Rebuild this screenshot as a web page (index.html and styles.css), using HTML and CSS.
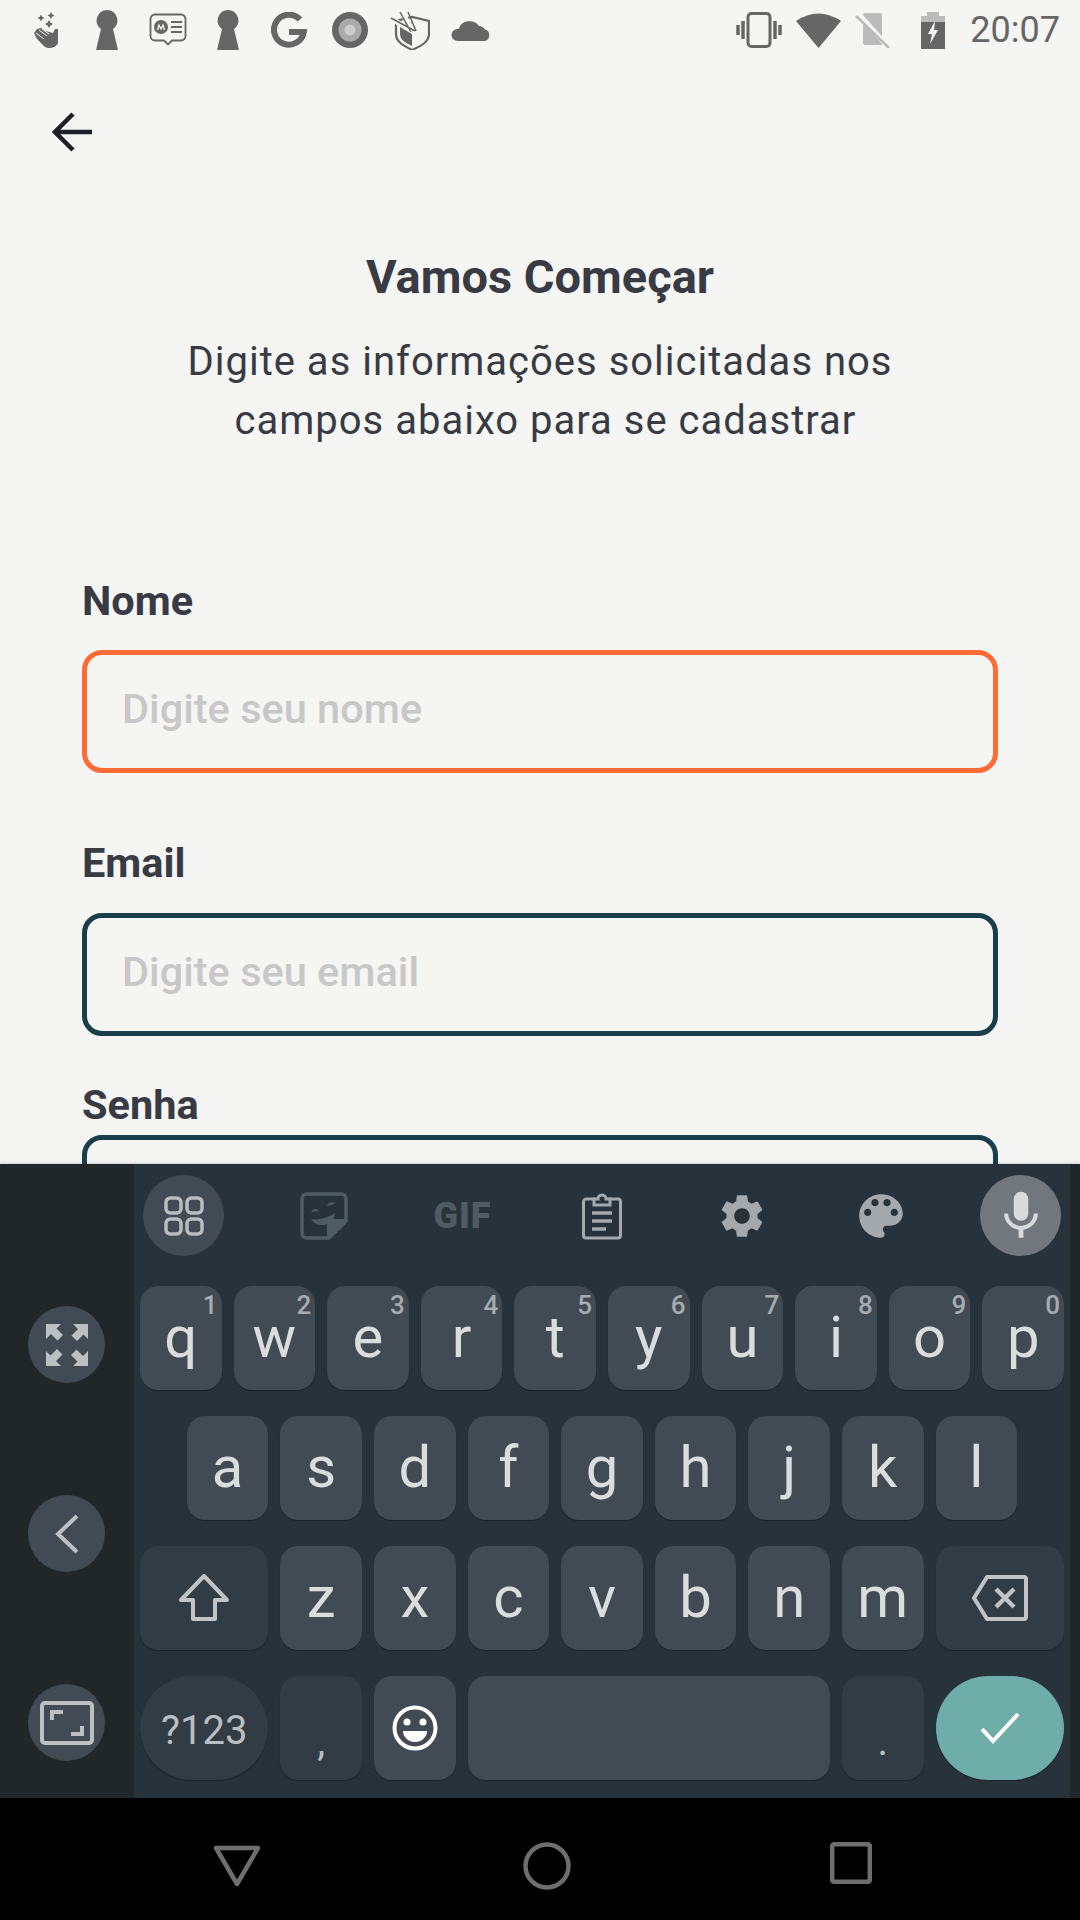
FILE: index.html
```html
<!DOCTYPE html>
<html lang="pt-BR">
<head>
  <meta charset="UTF-8">
  <title>Vamos Começar</title>
  <link rel="stylesheet" href="styles.css">
</head>
<body>
  <div class="screen">
    <div class="status-bar">
      <div class="status-left">
        <span class="status-cell"><svg width="26" height="36" viewBox="0 0 26 36"><path fill="#666" d="M1 21l3-4 4-1 5 3 7 2 2-4 3 0v14q-2 5-9 5-4 0-7-4l-5-5z"/><path fill="none" stroke="#f5f5f3" stroke-width="1" d="M3 21l8 6M6 18l8 6M9 17l7 5"/><path fill="#666" d="M8 2.500l1.200 2.300 2.300 1.200-2.300 1.200L8 9.500 6.800 7.200 4.500 6l2.300-1.200zM18 0l1.200 2.300 2.300 1.200-2.300 1.200L18 7l-1.200-2.300-2.300-1.200 2.300-1.200zM16 8l1.500 2.500L20 12l-2.500 1.500L16 16l-1.500-2.500L12 12l2.500-1.500z"/></svg></span>
        <span class="status-cell"><svg width="22" height="40" viewBox="0 0 22 40"><use href="#keyhole"/></svg></span>
        <span class="status-cell"><svg width="38" height="34" viewBox="0 0 38 34"><path fill="none" stroke="#666" stroke-width="1.800" d="M6 1.500h26a4.500 4.500 0 0 1 4.500 4.500v17a4.500 4.500 0 0 1-4.500 4.500h-9l-4 4-4-4h-9a4.500 4.500 0 0 1-4.500-4.500v-17a4.500 4.500 0 0 1 4.500-4.500z"/><circle cx="12" cy="14" r="7" fill="#666"/><path fill="none" stroke="#f5f5f3" stroke-width="1.300" d="M8.500 17l1.500-5 2 4 2-4 1.500 5"/><path stroke="#666" stroke-width="2" d="M22 9h11M22 14h11M22 19h11"/></svg></span>
        <span class="status-cell"><svg width="22" height="40" viewBox="0 0 22 40"><use href="#keyhole"/></svg></span>
        <span class="status-cell"><svg width="36" height="36" viewBox="0 0 36 36"><path fill="none" stroke="#666" stroke-width="6" d="M29 7.500A15 15 0 1 0 32.800 20H18"/></svg></span>
        <span class="status-cell"><svg width="36" height="36" viewBox="0 0 36 36"><circle cx="18" cy="18" r="18" fill="#666"/><circle cx="18" cy="18" r="11.500" fill="#aaa"/><circle cx="18" cy="18" r="5.500" fill="#ccc"/></svg></span>
        <span class="status-cell"><svg width="40" height="40" viewBox="0 0 40 40"><path fill="none" stroke="#666" stroke-width="2.200" d="M6 11l16-4 17 4v13c0 8-8 12-17 16C14 36 6 32 6 24z"/><path fill="#666" d="M10 15l12-3v24c-6-3-12-6-12-12z"/><path stroke="#f5f5f3" stroke-width="5" d="M2 9l23 14M11 1l13 21"/><path stroke="#666" stroke-width="1.500" d="M1 8l24 13M18 2l8 19M10 2l11 20"/></svg></span>
        <span class="status-cell"><svg width="40" height="24" viewBox="0 0 40 24"><path fill="#666" d="M7 23a6 6 0 0 1-1-12l2-.3a11 10 0 0 1 20-2.700 7.500 7.500 0 0 1 6 3.500 6 6 0 0 1 0 11.500z"/></svg></span>
      </div>
      <div class="status-right">
        <svg width="46" height="36" viewBox="0 0 46 36"><rect x="12" y="1.500" width="22" height="33" rx="3.500" fill="none" stroke="#666" stroke-width="3"/><path stroke="#666" stroke-width="3.500" d="M7 9v18M2 13v10M39 9v18M44 13v10"/></svg>
        <svg width="45" height="36" viewBox="0 0 45 36"><path fill="#666" d="M0 9Q22.500-6 45 9L22.500 36z"/></svg>
        <svg width="36" height="36" viewBox="0 0 36 36"><path fill="#bbb" d="M8 3a2 2 0 0 1 2-2h15a2 2 0 0 1 2 2v30H10a2 2 0 0 1-2-2z"/><path stroke="#f5f5f3" stroke-width="5" d="M2 0l32 36"/><path stroke="#bbb" stroke-width="2.500" d="M1 4l33 32"/></svg>
        <svg class="status-battery" width="24" height="37" viewBox="0 0 24 37"><path fill="#bbb" d="M6 4V0h12v4h6v10H0V4z"/><path fill="#666" d="M0 10h24v27H0z"/><path fill="#f5f5f3" d="M14 9L7 22h4l-2 10 8-14h-4z"/></svg>
        <span class="status-time">20:07</span>
      </div>
    </div>

    <div class="content">
      <div class="back-button">
        <svg width="40" height="40" viewBox="0 0 40 40"><path fill="none" stroke="#1f2025" stroke-width="4.500" d="M40 20H3M21 2L3 20l18 18"/></svg>
      </div>
      <h1>Vamos Começar</h1>
      <p class="subtitle">Digite as informações solicitadas nos<br>&nbsp;campos abaixo para se cadastrar</p>

      <div class="form">
        <label class="field-label">Nome</label>
        <div class="field field-focus"><span class="placeholder">Digite seu nome</span></div>
        <label class="field-label label-email">Email</label>
        <div class="field"><span class="placeholder">Digite seu email</span></div>
        <label class="field-label label-senha">Senha</label>
        <div class="field"></div>
      </div>
    </div>

    <div class="keyboard">
      <div class="kb-side">
        <div class="side-btn">
          <svg width="44" height="44" viewBox="0 0 44 44" fill="#bcc0c3"><path d="M1 1h15l-4.500 4.500 6.500 6.500-5.500 5.500-6.500-6.500L1 16z"/><path transform="rotate(90 22 22)" d="M1 1h15l-4.500 4.500 6.500 6.500-5.500 5.500-6.500-6.500L1 16z"/><path transform="rotate(180 22 22)" d="M1 1h15l-4.500 4.500 6.500 6.500-5.500 5.500-6.500-6.500L1 16z"/><path transform="rotate(270 22 22)" d="M1 1h15l-4.500 4.500 6.500 6.500-5.500 5.500-6.500-6.500L1 16z"/></svg>
        </div>
        <div class="side-btn">
          <svg width="24" height="40" viewBox="0 0 24 40"><path fill="none" stroke="#bcc0c3" stroke-width="4" d="M22 2L3 20l19 18"/></svg>
        </div>
        <div class="side-btn">
          <svg width="54" height="44" viewBox="0 0 54 44"><rect x="2" y="2" width="50" height="40" rx="3" fill="none" stroke="#bcc0c3" stroke-width="4"/><path fill="none" stroke="#bcc0c3" stroke-width="4" d="M12 19v-8h11M42 25v8H31"/></svg>
        </div>
      </div>

      <div class="kb-main">
        <div class="kb-toolbar">
          <div class="tool-btn tool-active">
            <svg width="40" height="40" viewBox="0 0 40 40" fill="none" stroke="#b9bdc0" stroke-width="3.500"><rect x="2" y="2" width="15" height="15" rx="4.500"/><rect x="23" y="2" width="15" height="15" rx="4.500"/><rect x="2" y="23" width="15" height="15" rx="4.500"/><rect x="23" y="23" width="15" height="15" rx="4.500"/></svg>
          </div>
          <div class="tool-btn">
            <svg width="50" height="48" viewBox="-2 0 50 48"><path fill="none" stroke="#505c64" stroke-width="3.500" d="M7 2h34a5 5 0 0 1 5 5v22L29 46H7a5 5 0 0 1-5-5V7a5 5 0 0 1 5-5z"/><path fill="#505c64" d="M46 27L27 46V33a6 6 0 0 1 6-6z"/><path fill="#505c64" d="M11 27q12 2 24-6-1 12-13 12-7 0-11-6zM11 20a4.500 4.500 0 0 1 8-1zM27 14a4.500 4.500 0 0 1 8-2z"/></svg>
          </div>
          <div class="tool-btn"><span class="gif-label">GIF</span></div>
          <div class="tool-btn">
            <svg width="40" height="48" viewBox="0 0 40 48"><path fill="none" stroke="#a3a9ad" stroke-width="3" d="M13 7H4a2.500 2.500 0 0 0-2.500 2.500v34A2.500 2.500 0 0 0 4 46h32a2.500 2.500 0 0 0 2.500-2.500v-34A2.500 2.500 0 0 0 36 7h-9"/><path fill="none" stroke="#a3a9ad" stroke-width="3" d="M12 13V7h4a4 4 0 0 1 8 0h4v6z"/><path stroke="#a3a9ad" stroke-width="3.500" d="M10 21h20M10 29h20M10 37h14"/></svg>
          </div>
          <div class="tool-btn">
            <svg width="52" height="52" viewBox="0 0 24 24"><path fill="#a3a9ad" d="M19.140 12.940c.04-.3.06-.61.06-.94 0-.32-.02-.64-.07-.94l2.030-1.580a.49.49 0 0 0 .12-.61l-1.920-3.320a.488.488 0 0 0-.59-.22l-2.390.96c-.5-.38-1.030-.7-1.620-.94l-.36-2.540a.484.484 0 0 0-.48-.41h-3.840c-.24 0-.43.17-.47.41l-.36 2.540c-.59.24-1.130.57-1.620.94l-2.390-.96c-.22-.08-.47 0-.59.22L2.740 8.870c-.12.21-.08.47.12.61l2.030 1.580c-.05.3-.09.63-.09.94s.02.64.07.94l-2.030 1.580a.49.49 0 0 0-.12.61l1.920 3.320c.12.22.37.29.59.22l2.390-.96c.5.38 1.030.7 1.620.94l.36 2.540c.05.24.24.41.48.41h3.840c.24 0 .44-.17.47-.41l.36-2.540c.59-.24 1.130-.56 1.620-.94l2.390.96c.22.08.47 0 .59-.22l1.920-3.320c.12-.22.07-.47-.12-.61l-2.010-1.580zM12 15.600c-1.980 0-3.600-1.620-3.600-3.600s1.620-3.600 3.600-3.600 3.600 1.620 3.600 3.600-1.620 3.600-3.600 3.600z"/></svg>
          </div>
          <div class="tool-btn">
            <svg width="58" height="58" viewBox="0 0 24 24"><path fill="#a3a9ad" d="M12 3c-4.970 0-9 4.030-9 9s4.030 9 9 9c.83 0 1.500-.67 1.500-1.500 0-.39-.15-.74-.39-1.010-.23-.26-.38-.61-.38-.99 0-.83.67-1.500 1.500-1.500H16c2.760 0 5-2.240 5-5 0-4.420-4.030-8-9-8zm-5.500 9c-.83 0-1.500-.67-1.500-1.500S5.670 9 6.500 9 8 9.670 8 10.500 7.330 12 6.500 12zm3-4C8.670 8 8 7.330 8 6.500S8.670 5 9.500 5s1.500.67 1.500 1.500S10.330 8 9.500 8zm5 0c-.83 0-1.500-.67-1.500-1.500S13.670 5 14.500 5s1.500.67 1.500 1.500S15.330 8 14.500 8zm3 4c-.83 0-1.500-.67-1.500-1.500S16.670 9 17.500 9s1.500.67 1.500 1.500-.67 1.500-1.500 1.500z"/></svg>
          </div>
          <div class="tool-btn tool-mic">
            <svg width="58" height="58" viewBox="0 0 24 24"><path fill="#d8dadc" d="M12 14c1.660 0 3-1.340 3-3V5c0-1.660-1.340-3-3-3S9 3.340 9 5v6c0 1.660 1.340 3 3 3zm5.300-3c0 3-2.540 5.100-5.300 5.100S6.700 14 6.700 11H5c0 3.410 2.720 6.230 6 6.720V21h2v-3.280c3.280-.48 6-3.300 6-6.720h-1.700z"/></svg>
          </div>
        </div>

        <div class="key-grid">
          <div class="key">q<span class="hint">1</span></div>
          <div class="key">w<span class="hint">2</span></div>
          <div class="key">e<span class="hint">3</span></div>
          <div class="key">r<span class="hint">4</span></div>
          <div class="key">t<span class="hint">5</span></div>
          <div class="key">y<span class="hint">6</span></div>
          <div class="key">u<span class="hint">7</span></div>
          <div class="key">i<span class="hint">8</span></div>
          <div class="key">o<span class="hint">9</span></div>
          <div class="key">p<span class="hint">0</span></div>

          <div class="key row-indent">a</div>
          <div class="key">s</div>
          <div class="key">d</div>
          <div class="key">f</div>
          <div class="key">g</div>
          <div class="key">h</div>
          <div class="key">j</div>
          <div class="key">k</div>
          <div class="key">l</div>

          <div class="key key-wide key-dark">
            <svg width="50" height="48" viewBox="0 0 50 48"><path fill="none" stroke="#c0c4c6" stroke-width="4" stroke-linejoin="round" d="M25 2L2 26h12v19h22V26h12z"/></svg>
          </div>
          <div class="key">z</div>
          <div class="key">x</div>
          <div class="key">c</div>
          <div class="key">v</div>
          <div class="key">b</div>
          <div class="key">n</div>
          <div class="key">m</div>
          <div class="key key-wide key-dark">
            <svg width="56" height="46" viewBox="0 0 56 46"><path fill="none" stroke="#c0c4c6" stroke-width="4" stroke-linejoin="round" d="M15 2h37a2 2 0 0 1 2 2v38a2 2 0 0 1-2 2H15L2 23z"/><path fill="none" stroke="#c0c4c6" stroke-width="4.500" d="M24 14l18 18M42 14L24 32"/></svg>
          </div>

          <div class="key key-wide key-dark key-pill key-symbols">?123</div>
          <div class="key key-dark key-punct">,</div>
          <div class="key key-emoji">
            <svg width="46" height="46" viewBox="0 0 46 46"><circle cx="23" cy="23" r="20.500" fill="none" stroke="#fff" stroke-width="4"/><circle cx="15" cy="17" r="3.500" fill="#fff"/><circle cx="31" cy="17" r="3.500" fill="#fff"/><path fill="#fff" d="M11 26h24a12 11 0 0 1-24 0z"/></svg>
          </div>
          <div class="key key-space"></div>
          <div class="key key-dark key-punct">.</div>
          <div class="key key-wide key-pill key-enter">
            <svg width="40" height="32" viewBox="0 0 40 32"><path fill="none" stroke="#fff" stroke-width="4" d="M2 17l11 12L38 2"/></svg>
          </div>
        </div>
      </div>

      <div class="kb-edge"></div>
    </div>

    <div class="nav-bar">
      <svg class="nav-back" width="48" height="42" viewBox="0 0 48 42"><path fill="none" stroke="#6e6e6e" stroke-width="4.500" stroke-linejoin="round" d="M3 3h42L24 39z"/></svg>
      <svg class="nav-home" width="48" height="48" viewBox="0 0 48 48"><circle cx="24" cy="24" r="21.500" fill="none" stroke="#6e6e6e" stroke-width="4.500"/></svg>
      <svg class="nav-recent" width="42" height="42" viewBox="0 0 42 42"><rect x="2.200" y="2.200" width="37.600" height="37.600" rx="2" fill="none" stroke="#6e6e6e" stroke-width="4.500"/></svg>
    </div>
  </div>

  <svg class="defs" width="0" height="0">
    <defs>
      <path id="keyhole" fill="#666" d="M11 0a10.500 10.500 0 0 1 6 19l5 21H0l5-21a10.500 10.500 0 0 1 6-19z"/>
    </defs>
  </svg>
</body>
</html>
```

FILE: styles.css
```css
* {
  box-sizing: border-box;
}

body {
  margin: 0;
  padding: 0;
  background-color: #F5F5F3;
  font-family: Roboto, sans-serif;
}

.screen {
  display: flex;
  flex-direction: column;
  width: 1080px;
  height: 1920px;
  overflow: hidden;
}

.defs {
  position: absolute;
}

/* status bar */
.status-bar {
  display: flex;
  justify-content: space-between;
  align-items: center;
  flex: none;
  height: 60px;
  padding: 0 20px 0 16px;
}

.status-left {
  display: flex;
  align-items: center;
}

.status-cell {
  display: flex;
  justify-content: center;
  align-items: center;
  width: 60.7px;
}

.status-right {
  display: flex;
  align-items: center;
  gap: 14px;
}

.status-battery {
  margin-left: 16px;
}

.status-time {
  margin-left: 11.5px;
  font-size: 36px;
  color: #666666;
}

/* page content */
.content {
  flex: 1;
  min-height: 0;
  overflow: hidden;
}

.back-button {
  height: 40px;
  margin: 52px 0 0 52px;
}

h1 {
  margin: 100px 0 0;
  text-align: center;
  font-size: 47px;
  line-height: 50px;
  font-weight: 700;
  color: #383B44;
}

.subtitle {
  margin: 30px 0 0;
  text-align: center;
  font-size: 40px;
  line-height: 59px;
  letter-spacing: 1px;
  color: #383B44;
}

.form {
  padding: 0 82px;
  margin-top: 128px;
}

.field-label {
  display: block;
  font-size: 41.5px;
  line-height: 46px;
  font-weight: 700;
  color: #383B44;
}

.label-email {
  margin-top: 67px;
}

.label-senha {
  margin-top: 46px;
}

.field {
  display: flex;
  align-items: center;
  height: 123px;
  margin-top: 26px;
  padding: 0 35px 7px;
  border: 5px solid #1A3E4C;
  border-radius: 20px;
}

.label-email + .field {
  margin-top: 27px;
}

.label-senha + .field {
  margin-top: 7px;
}

.field-focus {
  border-color: #FF6B35;
}

.placeholder {
  font-size: 41.5px;
  font-weight: 500;
  color: #C8C8C8;
}

/* keyboard */
.keyboard {
  display: flex;
  flex: none;
  height: 634px;
  background-color: #212629;
  box-shadow: 0 -1px 3px rgba(0, 0, 0, 0.15);
}

.kb-side {
  display: flex;
  flex-direction: column;
  align-items: center;
  gap: 112px;
  flex: none;
  width: 133px;
  padding-top: 142px;
}

.side-btn {
  display: flex;
  justify-content: center;
  align-items: center;
  width: 77px;
  height: 77px;
  border-radius: 50%;
  background-color: #424B54;
}

.kb-main {
  flex: none;
  width: 936px;
  height: 634px;
  margin-left: 1px;
  background-color: #27323A;
}

.kb-edge {
  flex: 1;
}

.kb-toolbar {
  display: flex;
  justify-content: space-between;
  height: 122px;
  padding: 11px 10px 0 9px;
}

.tool-btn {
  display: flex;
  justify-content: center;
  align-items: center;
  width: 81px;
  height: 81px;
  border-radius: 50%;
}

.tool-active {
  background-color: #424B54;
}

.tool-mic {
  margin-right: -1px;
  background-color: #71777D;
}

.gif-label {
  font-size: 36px;
  font-weight: 900;
  letter-spacing: 1px;
  color: #505C64;
}

.key-grid {
  display: grid;
  grid-template-columns: repeat(20, 1fr);
  grid-auto-rows: 104px;
  row-gap: 26px;
}

.key {
  position: relative;
  display: flex;
  justify-content: center;
  align-items: center;
  grid-column: span 2;
  margin: 0 6px;
  padding-bottom: 3px;
  border-radius: 18px;
  background-color: #424B54;
  box-shadow: 0 1px 1px rgba(0, 0, 0, 0.3);
  font-size: 58px;
  color: #DADDDE;
}

.row-indent {
  grid-column: 2 / span 2;
}

.key-wide {
  grid-column: span 3;
}

.key-dark {
  padding-bottom: 0;
  background-color: #313C44;
}

.key-emoji {
  padding-bottom: 0;
}

.key-pill {
  border-radius: 52px;
}

.key-symbols {
  padding-top: 4px;
  font-size: 40px;
  color: #B9BEC1;
}

.key-punct {
  padding-top: 26px;
  font-size: 40px;
  color: #B9BEC1;
}

.key-space {
  grid-column: span 8;
}

.key-enter {
  padding-bottom: 0;
  background-color: #6EADA8;
}

.hint {
  position: absolute;
  top: 5px;
  right: 4px;
  font-size: 26px;
  line-height: 28px;
  font-weight: 500;
  color: #A5ABAF;
}

/* nav bar */
.nav-bar {
  display: flex;
  align-items: center;
  flex: none;
  height: 122px;
  padding-top: 14px;
  background-color: #000000;
}

.nav-back {
  margin-left: 213px;
}

.nav-home {
  margin-left: 262px;
}

.nav-recent {
  margin-left: 259px;
  margin-top: -6px;
}
```
